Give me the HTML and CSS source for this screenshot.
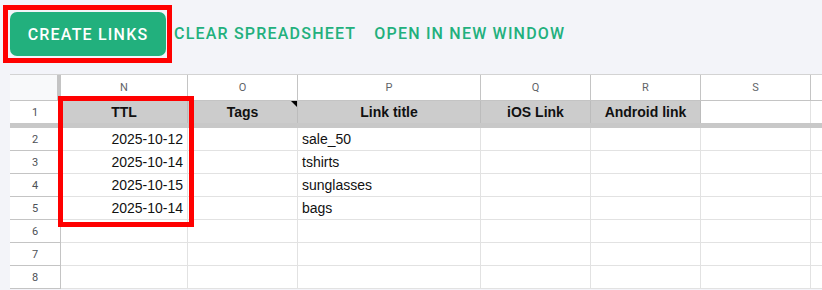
FILE: index.html
```html
<!DOCTYPE html>
<html lang="en">
<head>
  <meta charset="UTF-8" />
  <meta name="viewport" content="width=device-width, initial-scale=1.0"/>
  <title>Link sheet</title>
  <link rel="stylesheet" href="styles.css">
</head>
<body>
  <div class="toolbar">
    <div class="mark">
      <button class="btn-main">Create links</button>
    </div>
    <a class="btn-text clear">Clear spreadsheet</a>
    <a class="btn-text open">Open in new window</a>
  </div>

  <div class="sheet">
    <div class="grid" id="grid"></div>
    <div class="mark-col"></div>
  </div>

  <script>
    const cols = ["N", "O", "P", "Q", "R", "S", ""];
    const head = ["TTL", "Tags", "Link title", "iOS Link", "Android link", "", ""];
    const rows = [
      ["2025-10-12", "", "sale_50"],
      ["2025-10-14", "", "tshirts"],
      ["2025-10-15", "", "sunglasses"],
      ["2025-10-14", "", "bags"],
      [], [], []
    ];

    const grid = document.getElementById("grid");
    let html = `<div class="corner"></div>`;
    cols.forEach(c => html += `<div class="col-head">${c}</div>`);

    html += `<div class="row-head first">1</div>`;
    head.forEach((h, i) => {
      const cls = h ? "cell title" : "cell";
      const note = h === "Tags" ? `<span class="note"></span>` : "";
      html += `<div class="${cls}">${h}${note}</div>`;
    });
    html += `<div class="freeze"></div>`;

    rows.forEach((r, n) => {
      html += `<div class="row-head">${n + 2}</div>`;
      cols.forEach((c, i) => {
        const v = r[i] || "";
        const cls = i === 0 ? "cell num" : "cell";
        html += `<div class="${cls}">${v}</div>`;
      });
    });
    grid.innerHTML = html;
  </script>
</body>
</html>
```

FILE: styles.css
```css
* {
  box-sizing: border-box;
}
body {
  margin: 0;
  background: #f3f4f9;
  font-family: "Liberation Sans", Arial, sans-serif;
  overflow: hidden;
}
.toolbar {
  display: flex;
  align-items: flex-start;
  padding: 5px 0 0 3px;
  height: 74px;
}
.mark {
  border: 5px solid #ff0000;
  padding: 2px 1px 2px 2px;
}
.btn-main {
  display: block;
  width: 156px;
  height: 44px;
  padding: 0;
  background: #22b07d;
  color: #fff;
  border: none;
  border-radius: 7px;
  font-family: Roboto, sans-serif;
  font-weight: 500;
  font-size: 16px;
  letter-spacing: 1.2px;
  text-transform: uppercase;
  cursor: pointer;
}
.btn-text {
  font-family: Roboto, sans-serif;
  font-weight: 500;
  font-size: 16px;
  letter-spacing: 1.2px;
  text-transform: uppercase;
  color: #22b07d;
  margin-top: 19px;
  cursor: pointer;
}
.clear {
  margin-left: 2px;
}
.open {
  margin-left: 18px;
}
.sheet {
  position: relative;
  margin-left: 10px;
  background: #fff;
  border-top: 1px solid #d3d3d3;
}
.grid {
  display: grid;
  grid-template-columns: 51px 127px 110px 183px 110px 110px 110px 110px;
  grid-auto-rows: 23px;
  grid-template-rows: 26px 22px 5px;
}
.corner {
  background: #f8f9fa;
  border-right: 4px solid #c4c4c4;
  border-bottom: 1px solid #c4c4c4;
}
.col-head {
  display: flex;
  align-items: center;
  justify-content: center;
  font-family: Roboto, sans-serif;
  font-size: 11px;
  color: #5f6368;
  border-right: 1px solid #c4c4c4;
  border-bottom: 1px solid #c4c4c4;
}
.row-head {
  display: flex;
  align-items: center;
  justify-content: center;
  font-family: Roboto, sans-serif;
  font-size: 11px;
  color: #4d5156;
  border-right: 1px solid #c4c4c4;
  border-bottom: 1px solid #c4c4c4;
}
.row-head.first {
  border-bottom: none;
}
.cell {
  position: relative;
  display: flex;
  align-items: center;
  padding: 0 4px;
  font-size: 14px;
  color: #111;
  border-right: 1px solid #e2e2e2;
  border-bottom: 1px solid #e2e2e2;
  white-space: nowrap;
}
.cell.title {
  background: #cccccc;
  font-weight: bold;
  justify-content: center;
  border-right-color: #bcbcbc;
  border-bottom: none;
}
.cell.num {
  justify-content: flex-end;
}
.grid > .cell:nth-child(15),
.grid > .cell:nth-child(16) {
  border-bottom: none;
}
.note {
  position: absolute;
  top: 0;
  right: 0;
  width: 0;
  height: 0;
  border-top: 6px solid #000;
  border-left: 6px solid transparent;
}
.freeze {
  grid-column: 1 / -1;
  background: #c8c8c8;
}
.mark-col {
  position: absolute;
  left: 48px;
  top: 21px;
  width: 136px;
  height: 131px;
  border: 5px solid #ff0000;
}
```
